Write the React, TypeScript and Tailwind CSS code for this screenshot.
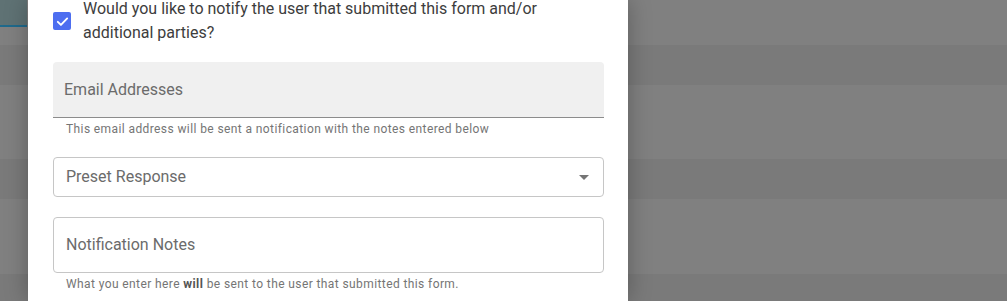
import React from "react";

const stripes = [
  { h: "h-[45px]", c: "bg-[#808080]" },
  { h: "h-[40px]", c: "bg-[#7a7a7a]" },
  { h: "h-[74px]", c: "bg-[#808080]" },
  { h: "h-[40px]", c: "bg-[#7a7a7a]" },
  { h: "h-[75px]", c: "bg-[#808080]" },
  { h: "h-[27px]", c: "bg-[#7a7a7a]" },
];

const Checkbox: React.FC = () => (
  <div className="w-[18px] h-[18px] shrink-0 rounded-[2px] bg-[#4d6ef0] flex items-center justify-center">
    <svg width="15" height="15" viewBox="0 0 24 24" fill="none">
      <path d="M4.5 12.5l5 5L19.5 7" stroke="white" strokeWidth="3" strokeLinecap="round" strokeLinejoin="round" />
    </svg>
  </div>
);

export default function App() {
  return (
    <div
      className="relative w-[1007px] h-[301px] overflow-hidden"
      style={{ fontFamily: "Roboto, 'Liberation Sans', sans-serif" }}
    >
      {/* ── Dimmed page behind ───────────────────────────── */}
      <div className="flex flex-col">
        {stripes.map((s, i) => (
          <div key={i} className={`${s.h} ${s.c}`} />
        ))}
      </div>
      <div className="absolute left-0 top-0 w-[27px] h-[27px] bg-[#5f7274] border-b-2 border-[#1f6a8c]" />

      {/* ── Modal ─────────────────────────────────────────── */}
      <div className="absolute left-[28px] top-0 w-[600px] h-full bg-white shadow-[0_0_22px_rgba(0,0,0,0.28)]">
        <div className="pl-[25px] pr-[24px] -mt-[3px] flex flex-col">
          <div className="flex items-center gap-[12px]">
            <Checkbox />
            <p className="text-[16px] leading-[24px] text-[#3d3d3d]">
              Would you like to notify the user that submitted this form and/or additional parties?
            </p>
          </div>

          {/* Email addresses (filled) */}
          <div className="mt-[17px] h-[56px] rounded-t-[4px] bg-[#f0f0f0] border-b border-[#8c8c8c] flex items-center px-[11px]">
            <span className="text-[16px] text-[#6b6b6b]">Email Addresses</span>
          </div>
          <p className="mt-[3px] pl-[13px] text-[12px] leading-[16px] tracking-[0.4px] text-[#757575]">
            This email address will be sent a notification with the notes entered below
          </p>

          {/* Preset response (select) */}
          <div className="mt-[20px] h-[40px] rounded-[4px] border border-[#c6c6c6] flex items-center justify-between pl-[12px] pr-[14px]">
            <span className="text-[16px] text-[#6b6b6b]">Preset Response</span>
            <svg width="10" height="5" viewBox="0 0 10 5">
              <path d="M0 0h10L5 5z" fill="#757575" />
            </svg>
          </div>

          {/* Notification notes */}
          <div className="mt-[20px] h-[56px] rounded-[4px] border border-[#c6c6c6] flex items-center pl-[12px]">
            <span className="text-[16px] text-[#6b6b6b]">Notification Notes</span>
          </div>
          <p className="mt-[3px] pl-[13px] text-[12px] leading-[16px] tracking-[0.4px] text-[#757575]">
            What you enter here <b className="font-bold text-[#555]">will</b> be sent to the user that submitted this form.
          </p>
        </div>
      </div>
    </div>
  );
}
